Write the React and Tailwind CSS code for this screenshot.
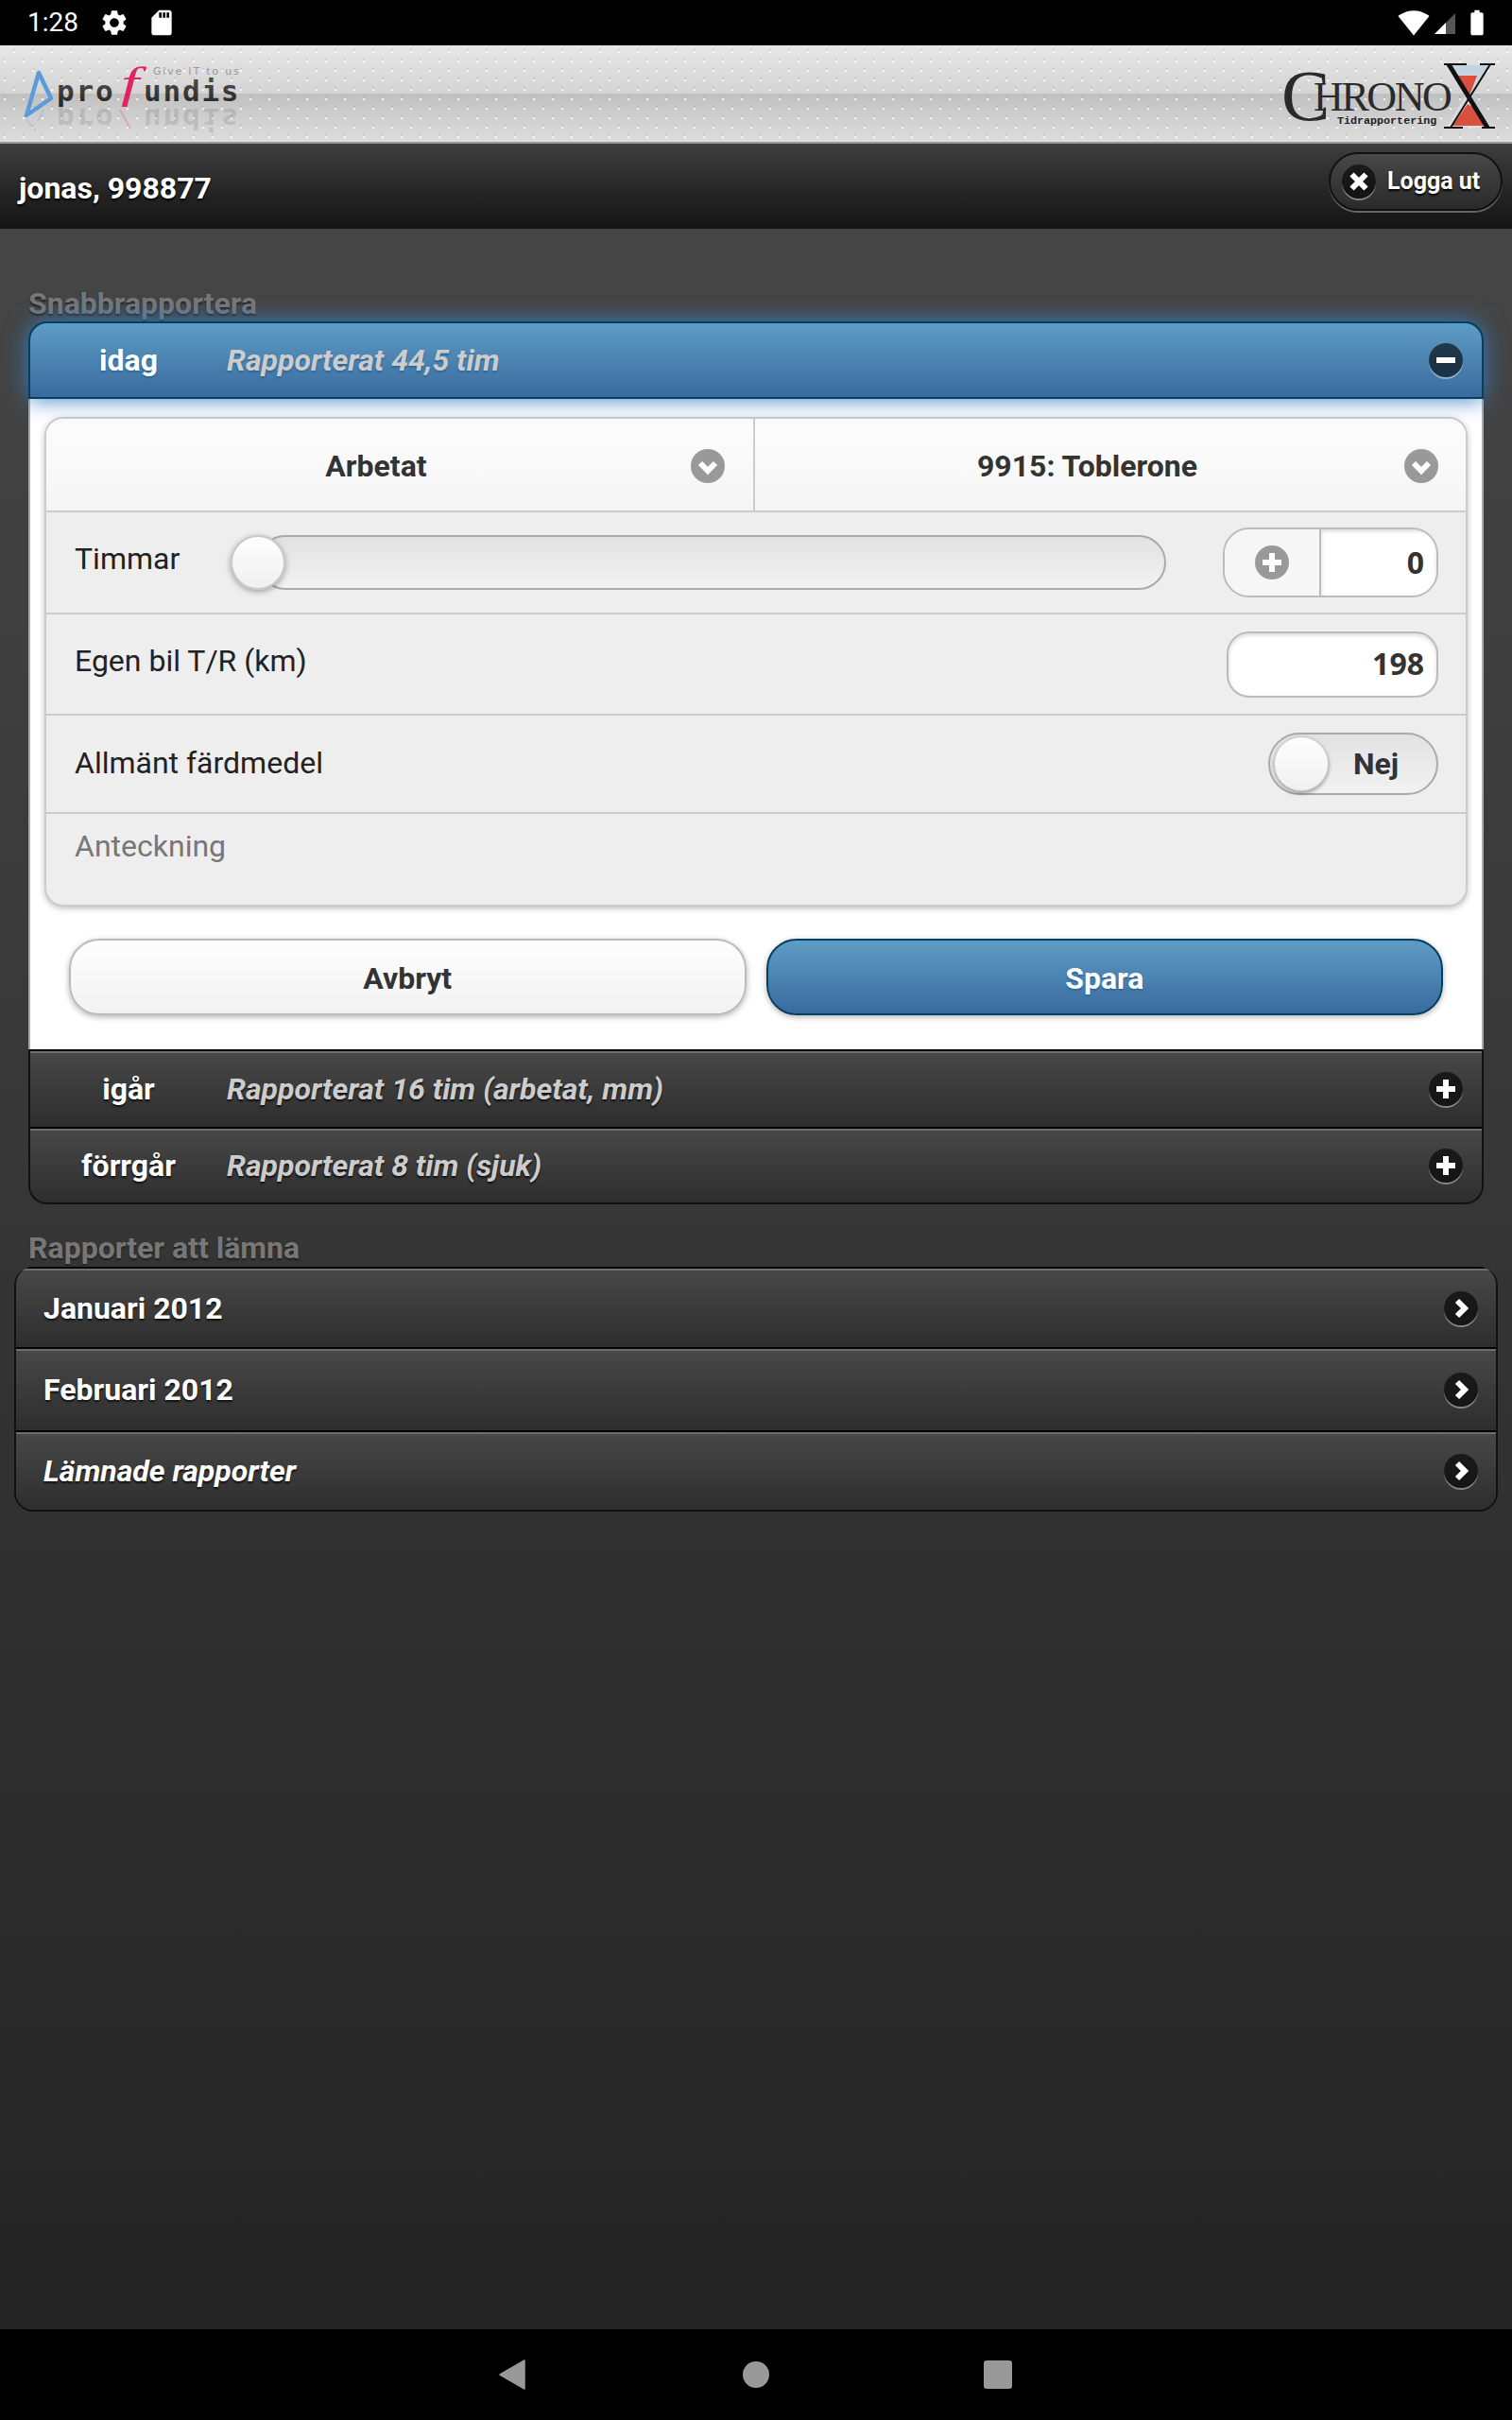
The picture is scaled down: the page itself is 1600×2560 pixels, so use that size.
import { MdSettings, MdSdCard, MdSignalWifi4Bar, MdBatteryFull } from "react-icons/md";

const roboto = "font-['Roboto',sans-serif]";

// the small round jQuery Mobile style icon
function RoundIcon({ type, light }) {
  const bg = light ? "bg-[#999]" : "bg-[#000]/60 shadow-[0_2px_0_rgba(255,255,255,0.4)]";
  const paths = {
    plus: "M18 8v20M8 18h20",
    minus: "M8 18h20",
    close: "M10.5 10.5l15 15M25.5 10.5l-15 15",
    right: "M14 10l8 8-8 8",
    down: "M10 15l8 8 8-8",
  };
  return (
    <span className={`block w-9 h-9 rounded-full shrink-0 ${bg}`}>
      <svg width="36" height="36" viewBox="0 0 36 36" fill="none">
        <path d={paths[type]} stroke="#fff" strokeWidth="6" />
      </svg>
    </span>
  );
}

function ProfundisLogo() {
  return (
    <svg width="300" height="104" viewBox="0 48 300 104" className="block">
      <defs>
        <linearGradient id="pf" x1="0" y1="0" x2="0" y2="1">
          <stop offset="0" stopColor="#555" />
          <stop offset="1" stopColor="#222" />
        </linearGradient>
      </defs>
      <path d="M41 77L54 104 28 122z" fill="none" stroke="#5b9bd8" strokeWidth="4.5" strokeLinejoin="round" />
      <path d="M28 127l10 11M46 116l-6 12" fill="none" stroke="#5b9bd8" strokeWidth="2" opacity="0.2" />
      <g fontFamily="'DejaVu Sans Mono', monospace" fontSize="31" fontWeight="700" letterSpacing="1.8" fill="url(#pf)">
        <text x="60" y="107">pro</text>
        <text x="152" y="107">undis</text>
      </g>
      <g fontFamily="'DejaVu Sans Mono', monospace" fontSize="31" fontWeight="700" letterSpacing="1.8" fill="#333" opacity="0.13" transform="translate(0 222) scale(1 -1)">
        <text x="60" y="107">pro</text>
        <text x="152" y="107">undis</text>
      </g>
      {/* the swung f, widened since no installed italic f is this wide */}
      <text x="0" y="0" transform="translate(128 103) scale(1.5 1)" fontFamily="'Liberation Serif', serif" fontStyle="italic" fontSize="46" fill="#e0245e">f</text>
      <path d="M127 116l11 20" stroke="#e0245e" strokeWidth="2" opacity="0.2" />
      <text x="162" y="79" fontFamily="'DejaVu Sans', sans-serif" fontSize="11" letterSpacing="1.8" fill="#999">Give IT to us</text>
    </svg>
  );
}

function ChronoLogo() {
  return (
    <svg width="260" height="104" viewBox="1340 48 260 104" className="block">
      <defs>
        <linearGradient id="sand" x1="0" y1="0" x2="0" y2="1">
          <stop offset="0" stopColor="#c3d3e0" />
          <stop offset="1" stopColor="#e2dfe0" />
        </linearGradient>
      </defs>
      <g fontFamily="'Liberation Serif', serif" fill="#2a2a2a">
        <text x="1356" y="127" fontSize="77">C</text>
        <text x="1390" y="117" fontSize="44" letterSpacing="-2.4">HRONO</text>
      </g>
      <text x="1415" y="131" fontFamily="'Liberation Mono', monospace" fontSize="11.7" fontWeight="700" fill="#222">Tidrapportering</text>
      <path d="M1533 69h42l-18 34 18 32h-44l19-33z" fill="url(#sand)" />
      <path d="M1543 80h20l-8 21zM1553 110l5 3 12 20h-33z" fill="#d9503f" />
      <path d="M1528 68h24M1566 68h16M1528 135h20M1568 135h14" stroke="#111" strokeWidth="2" />
      <path d="M1533 68l41 67" stroke="#111" strokeWidth="5" />
      <path d="M1577 68l-42 67" stroke="#111" strokeWidth="2" />
    </svg>
  );
}

function SectionTitle({ children, className }) {
  return (
    <h2 className={`px-[15px] text-[32px] font-bold text-[#777] [text-shadow:0_2px_2px_#222] ${className}`}>
      {children}
    </h2>
  );
}

function CollapsedDay({ day, note, className }) {
  return (
    <div className={`flex items-center border-t-2 border-black shadow-[inset_0_2px_0_#6f6f6f] bg-gradient-to-b from-[#484848] to-[#2e2e2e] ${className}`}>
      <span className="w-[208px] text-center text-[32px] font-bold text-white [text-shadow:0_2px_2px_#111]">{day}</span>
      <span className="flex-1 text-[32px] font-bold italic text-[#ccc] [text-shadow:0_2px_2px_#111]">{note}</span>
      <span className="mr-[20px]"><RoundIcon type="plus" /></span>
    </div>
  );
}

function SelectCell({ label, className }) {
  return (
    <div className={`flex items-center pl-[16px] pt-[2px] ${className}`}>
      <span className="flex-1 text-center text-[32px] font-bold text-[#333]">{label}</span>
      <RoundIcon type="down" light />
    </div>
  );
}

function FormRow({ label, labelClass, children, className }) {
  return (
    <div className={`flex items-center justify-between pl-[30px] pr-[29px] border-t-2 border-[#ccc] ${className}`}>
      <span className={`text-[32px] text-[#222] ${labelClass}`}>{label}</span>
      {children}
    </div>
  );
}

function ListRow({ label, italic, className }) {
  return (
    <div className={`flex items-center justify-between pl-[29px] pr-[19px] border-t-2 border-black shadow-[inset_0_2px_0_#6f6f6f] bg-gradient-to-b from-[#484848] to-[#2e2e2e] ${className}`}>
      <span className={`text-[32px] font-bold text-white [text-shadow:0_2px_2px_#111] ${italic ? "italic" : ""}`}>{label}</span>
      <RoundIcon type="right" />
    </div>
  );
}

export default function App() {
  return (
    <div className={`flex flex-col h-[2560px] w-[1600px] overflow-hidden ${roboto}`}>
      {/* status bar */}
      <div className="flex items-center justify-between h-12 shrink-0 bg-black text-white pl-[29px] pr-[21px]">
        <div className="flex items-center">
          <span className="text-[28px] mr-[22px]">1:28</span>
          <MdSettings size={32} />
          <MdSdCard size={32} className="ml-[18px]" />
        </div>
        <div className="flex items-center">
          <MdSignalWifi4Bar size={34} />
          <svg width="22" height="22" viewBox="0 0 22 22" className="ml-[5px] mt-[2px]">
            <path d="M0 22L22 0v22z" fill="#555" />
            <path d="M0 22L12 10v12z" fill="#fff" />
          </svg>
          <MdBatteryFull size={32} className="ml-[7px]" />
        </div>
      </div>

      {/* logos */}
      <div className="flex justify-between h-[104px] shrink-0 border-b-2 border-[#999] bg-[radial-gradient(circle,rgba(255,255,255,0.75)_1px,transparent_1.7px),radial-gradient(circle,rgba(255,255,255,0.75)_1px,transparent_1.7px),radial-gradient(circle,rgba(0,0,0,0.08)_1px,transparent_1.7px),radial-gradient(circle,rgba(0,0,0,0.08)_1px,transparent_1.7px),linear-gradient(to_bottom,#e6e6e6_0,#d4d4d4_50%,#c0c0c0_50%,#dedede_100%)] [background-size:20px_20px,20px_20px,20px_20px,20px_20px,100%_100%] [background-position:5px_-3px,-5px_7px,5px_-5px,-5px_5px,0_0]">
        <ProfundisLogo />
        <ChronoLogo />
      </div>

      {/* user bar */}
      <div className="flex items-center justify-between h-[90px] shrink-0 bg-gradient-to-b from-[#3e3e3e] to-[#141414] pl-[20px] pr-[10px]">
        <span className="pt-[4px] text-[32px] font-bold text-white [text-shadow:0_2px_2px_#000]">jonas, 998877</span>
        <button className="flex items-center h-[62px] w-[184px] -mt-[10px] pl-[12px] rounded-full border-2 border-[#111] shadow-[0_2px_0_#666] bg-gradient-to-b from-[#484848] to-[#2a2a2a] text-[25px] font-bold text-white [text-shadow:0_2px_2px_#000]">
          <RoundIcon type="close" />
          <span className="ml-[12px]">Logga ut</span>
        </button>
      </div>

      {/* main */}
      <main className="flex-1 px-[15px] pt-[60px] bg-gradient-to-b from-[#464646] to-[#242424]">
        <SectionTitle className="leading-[38px]">Snabbrapportera</SectionTitle>

        <div className="mx-[15px] rounded-[20px]">
          <div className="relative flex items-center h-[82px] rounded-t-[20px] border-2 border-[#044062] shadow-[0_0_24px_#387bbe] bg-gradient-to-b from-[#5f9cc5] to-[#396b9e]">
            <span className="w-[208px] text-center text-[32px] font-bold text-white [text-shadow:0_2px_2px_#2f6795]">idag</span>
            <span className="flex-1 text-[32px] font-bold italic text-[#ccc] [text-shadow:0_2px_2px_#2f6795]">Rapporterat 44,5 tim</span>
            <span className="mr-[20px]"><RoundIcon type="minus" /></span>
          </div>

          <div className="bg-white border-x-2 border-[#aaa] px-[15px] pt-[19px] pb-[36px]">
            <div className="rounded-[20px] border-2 border-[#ccc] shadow-[0_2px_6px_rgba(0,0,0,0.25)] bg-[#eee] overflow-hidden">
              <div className="flex h-[97px] bg-gradient-to-b from-[#fdfdfd] to-[#f5f5f5]">
                <SelectCell label="Arbetat" className="w-[750px] pr-[30px] border-r-2 border-[#ccc]" />
                <SelectCell label="9915: Toblerone" className="flex-1 pr-[29px]" />
              </div>
              <FormRow label="Timmar" labelClass="-mt-[8px]" className="h-[108px]">
                <div className="flex-1 flex items-center ml-[53px] mr-[60px]">
                  <div className="relative flex-1 h-[58px] ml-[30px] rounded-full border-2 border-[#aaa] bg-gradient-to-b from-[#e2e2e2] to-[#f2f2f2]">
                    <span className="absolute -left-[31px] -top-[2px] w-[58px] h-[58px] rounded-full border-2 border-[#c8c8c8] bg-gradient-to-b from-[#fefefe] to-[#f0f0f0] shadow-[0_2px_6px_rgba(0,0,0,0.35)]" />
                  </div>
                </div>
                <div className="flex h-[74px] w-[228px] rounded-[28px] border-2 border-[#bbb] overflow-hidden">
                  <span className="flex items-center justify-center w-[102px] border-r-2 border-[#bbb] bg-[#f6f6f6]">
                    <RoundIcon type="plus" light />
                  </span>
                  <input readOnly value="0" className="w-[122px] pr-[13px] bg-white text-right text-[32px] font-bold text-[#333] font-['Noto_Sans',sans-serif] shadow-[inset_0_2px_4px_rgba(0,0,0,0.15)] outline-none" />
                </div>
              </FormRow>
              <FormRow label="Egen bil T/R (km)" labelClass="-mt-[7px]" className="h-[107px]">
                <input readOnly value="198" className="w-[224px] h-[70px] pr-[13px] pb-[3px] rounded-[24px] border-2 border-[#bbb] bg-white text-right text-[32px] font-bold text-[#333] font-['Noto_Sans',sans-serif] shadow-[inset_0_2px_4px_rgba(0,0,0,0.15)] outline-none" />
              </FormRow>
              <FormRow label="Allmänt färdmedel" labelClass="-mt-[2px]" className="h-[104px]">
                <div className="relative flex items-center w-[180px] h-[66px] rounded-full border-2 border-[#aaa] bg-gradient-to-b from-[#e2e2e2] to-[#f2f2f2]">
                  <span className="absolute left-[4px] top-[2px] w-[58px] h-[58px] rounded-full border border-[#c8c8c8] bg-gradient-to-b from-[#fefefe] to-[#f0f0f0] shadow-[0_2px_4px_rgba(0,0,0,0.4)]" />
                  <span className="ml-[88px] text-[32px] font-bold text-[#333]">Nej</span>
                </div>
              </FormRow>
              <div className="border-t-2 border-[#ccc]">
                <textarea
                  placeholder="Anteckning"
                  className="block w-full h-[96px] pl-[30px] pt-[14px] bg-transparent text-[32px] leading-[40px] placeholder:text-[#777] outline-none"
                />
              </div>
            </div>

            <div className="flex gap-[21px] mt-[34px] px-[26px]">
              <button className="flex-1 h-[81px] pt-[2px] rounded-[32px] border-2 border-[#bbb] shadow-[0_2px_6px_rgba(0,0,0,0.3)] bg-gradient-to-b from-[#fefefe] to-[#f2f2f2] text-[32px] font-bold text-[#333]">Avbryt</button>
              <button className="flex-1 h-[81px] pt-[2px] rounded-[32px] border-2 border-[#044062] shadow-[0_2px_6px_rgba(0,0,0,0.3)] bg-gradient-to-b from-[#5f9cc5] to-[#396b9e] text-[32px] font-bold text-white [text-shadow:0_2px_2px_#2f6795]">Spara</button>
            </div>
          </div>

          <div className="border-x-2 border-b-2 border-[#111] rounded-b-[20px] overflow-hidden">
            <CollapsedDay day="igår" note="Rapporterat 16 tim (arbetat, mm)" className="h-[82px]" />
            <CollapsedDay day="förrgår" note="Rapporterat 8 tim (sjuk)" className="h-[80px]" />
          </div>
        </div>

        <SectionTitle className="mt-[28px] leading-[36px]">Rapporter att lämna</SectionTitle>

        <div className="mt-[2px] rounded-[20px] border-x-2 border-b-2 border-[#111] overflow-hidden">
          <ListRow label="Januari 2012" className="h-[85px]" />
          <ListRow label="Februari 2012" className="h-[88px]" />
          <ListRow label="Lämnade rapporter" italic className="h-[84px]" />
        </div>
      </main>

      {/* android nav */}
      <div className="flex items-center h-24 shrink-0 bg-black pl-[528px]">
        <svg width="28" height="32" viewBox="0 0 28 32"><path d="M27 1v30L1 16z" fill="#999" stroke="#999" strokeWidth="1.5" strokeLinejoin="round" /></svg>
        <span className="block ml-[230px] w-[28px] h-[28px] rounded-full bg-[#999]" />
        <span className="block ml-[227px] w-[30px] h-[30px] rounded-[3px] bg-[#999]" />
      </div>
    </div>
  );
}
